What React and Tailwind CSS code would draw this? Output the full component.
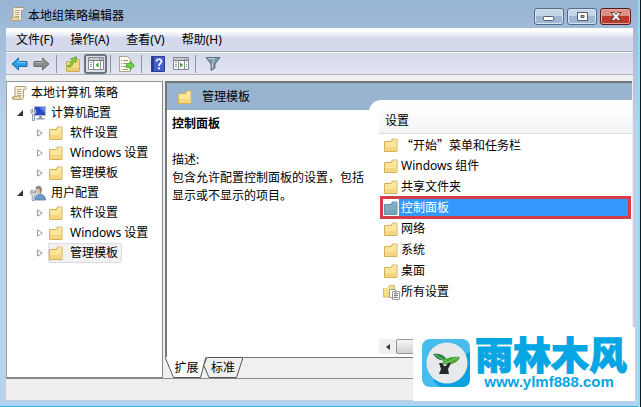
import React from 'react';

const FolderIcon = ({ selected }) => (
  <svg viewBox="0 0 16 16" className="w-4 h-4 shrink-0" aria-hidden="true">
    <path d="M1.500 4.500h6.500l1.500-2.500h4.500v12.500H1.500z" fill={selected ? '#6f9fb8' : '#f0d27c'} stroke={selected ? '#6292ab' : '#d3b15c'} />
    <path d="M2 5h6.500L10 3.500h3.500V14H2z" fill={selected ? '#82abbd' : '#fbe49c'} />
    <path d="M2 10h11.500v4H2z" fill={selected ? '#76a5ba' : '#f5d680'} />
    <path d="M10.500 2.500h3v1h-3.500z" fill={selected ? '#a5c8d4' : '#fff6d5'} />
  </svg>
);

const ScrollIcon = () => (
  <svg viewBox="0 0 16 16" className="w-4 h-4 shrink-0" aria-hidden="true">
    <path d="M5 1.500h9c1.500 0 1.500 3 0 3h-1.500v8c0 1.300-.8 2-2 2H2.500c-1.500 0-1.500-3 0-3H4V3c0-.8.300-1.500 1-1.500z" fill="#f7f0d8" stroke="#b39b6c" />
    <path d="M6 4.500h4.500M6 6.500h4.500M6 8.500h4.500M6 10.500h4.500" stroke="#b8a888" />
    <path d="M2.500 11.500h7v3h-7z" fill="#e8d9ac" stroke="#b39b6c" strokeWidth=".7" />
  </svg>
);

const ComputerIcon = () => (
  <svg viewBox="0 0 16 16" className="w-4 h-4 shrink-0" aria-hidden="true">
    <path d="M4.500 1.500h11v9h-11z" fill="#2a49c4" stroke="#aeb9cc" />
    <path d="M9 2h6v6z" fill="#5b85ee" />
    <path d="M9 11h3v2h2.500v1.500H6.500V13H9z" fill="#8d98ab" />
    <path d="M1 5v3l1.500 1v6.500h2V9L6 8V5L4.500 4v3h-2V4z" fill="#dfe6f0" stroke="#6b7a92" strokeWidth=".7" />
  </svg>
);

const UserIcon = () => (
  <svg viewBox="0 0 16 16" className="w-4 h-4 shrink-0" aria-hidden="true">
    <path d="M5 15c0-4 1.500-6 4.500-6s6 2 6 6z" fill="#6c9bc8" stroke="#4d769e" strokeWidth=".7" />
    <ellipse cx="8.500" cy="4.800" rx="3" ry="4" fill="#e3c19a" />
    <path d="M5.500 4C5.500-.5 12-.5 12 4.500c0 2-.5 3.500-2 4.500L9.500 4z" fill="#8b8d8c" />
    <path d="M.8 6v3l1.400 1v5.500h2V10l1.300-1V6L4.200 5v3h-2V5z" fill="#e5eaf0" stroke="#667a94" strokeWidth=".7" />
  </svg>
);

const AllSettingsIcon = () => (
  <svg viewBox="0 0 17 16" className="w-[17px] h-4 shrink-0" aria-hidden="true">
    <path d="M.5 4.500V13h7V9h4V1.500H6.500L5 4.500z" fill="#f6dc89" stroke="#d6bb6c" />
    <path d="M1 5h4.500L7 2.500" fill="none" stroke="#fff3c8" />
    <path d="M6.500 5.500h6v8h-6zM9.500 7.500h7v8h-7z" fill="#fff" stroke="#9b9b9b" />
    <path d="M11 9.500h1m1 0h2m-4 2h1m1 0h2m-4 2h1m1 0h2" stroke="#777" />
  </svg>
);

const ArrowIcon = ({ forward }) => (
  <svg viewBox="0 0 17 14" className={forward ? 'w-[17px] h-3.5 rotate-180' : 'w-[17px] h-3.5'} aria-hidden="true">
    <path d="M7.500 1v3.500H16v5H7.500V13L1 7z" fill={forward ? '#8c8c8c' : '#2aa0e6'} stroke={forward ? '#6b6b6b' : '#2267a6'} strokeLinejoin="round" />
    <path d={forward ? 'M7 11V8.500h8' : 'M7 3v2.500h8'} fill="none" stroke={forward ? '#b5b5b5' : '#7ed3fa'} />
  </svg>
);

const FolderUpIcon = () => (
  <svg viewBox="0 0 16 16" className="w-4 h-4" aria-hidden="true">
    <path d="M1.500 5.500h6.500l1.500-2h5v12h-13z" fill="#f5da8c" stroke="#cdab57" />
    <path d="M2 12h12v3H2z" fill="#efcb70" />
    <path d="M2 9.500c1 .8 2.500.5 3-1C5.500 6.500 6 5.500 7.500 4.500L5.500 3 11.500.8 11 6.500 9.300 5.500C8 7 8 8 7 9.500c-1.300 2-4 2-5 0z" fill="#8ccc39" stroke="#4d9820" strokeWidth=".7" />
  </svg>
);

const PanelIcon = ({ right }) => (
  <svg viewBox="0 0 16 13" className="w-4 h-[13px]" aria-hidden="true">
    <path d="M.5.5h15v12H.5z" fill="#fff" stroke="#84888f" />
    <path d="M1 1h14v2H1z" fill="#c6cbd3" />
    <path d="M11 2h1m1 0h1M1 3.500h14" stroke="#787d86" />
    <path d={right ? 'M11.500 4v8M5.500 4v8' : 'M5.500 4v8M12.500 4v8'} stroke="#8d929a" />
    <path d={right ? 'M7 5.500v5l3-2.500z' : 'M10.500 5.500v5l-3-2.500z'} fill="#35a12b" />
    <path d={right ? 'M2 5.500h2m-2 2h2m-2 2h2m9-4h1m-1 2h1m-1 2h1' : 'M2 5.500h2m-2 2h2m-2 2h2'} stroke="#9299a4" />
  </svg>
);

const ExportIcon = () => (
  <svg viewBox="0 0 16 16" className="w-4 h-4" aria-hidden="true">
    <path d="M.5.5h8l3 3v12H.5z" fill="#fffdf0" stroke="#aaa68a" />
    <path d="M2 4.500h1m1 0h5m-7 3h1m1 0h3m-5 3h1m1 0h3m-5 3h1m1 0h5" stroke="#969686" />
    <path d="M7.500 7.500h3.500V5l4.500 4.500L11 14v-2.500H7.500z" fill="#6fd04a" stroke="#3a9e28" strokeWidth=".8" />
  </svg>
);

const HelpIcon = () => (
  <svg viewBox="0 0 14 16" className="w-3.5 h-4" aria-hidden="true">
    <path d="M.5.5h13v15H.5z" fill="#4561c8" stroke="#2b3f91" />
    <path d="M1 1h2v14H1z" fill="#263c9b" />
    <path d="M5.500 5.500C5.500 2.500 10.500 2.500 10.500 5.500c0 2-2.500 2-2.500 4.500" fill="none" stroke="#fff" strokeWidth="1.700" />
    <circle cx="8" cy="12.300" r="1.100" fill="#fff" />
  </svg>
);

const FilterIcon = () => (
  <svg viewBox="0 0 16 15" className="w-4 h-[15px]" aria-hidden="true">
    <path d="M1 1.500h14L10 8v4l-4 2.500V8z" fill="#7e96a9" stroke="#5b7083" strokeLinejoin="round" />
    <path d="M3.500 2.500h6L7.500 8v4" fill="none" stroke="#c6d6e0" />
  </svg>
);

const Separator = () => <span className="w-px h-[18px] bg-[#8f949e] shrink-0" />;

const ToolButton = ({ label, active, children }) => (
  <button
    type="button"
    aria-label={label}
    className={
      active
        ? 'w-[23px] h-5 flex items-center justify-center rounded-[3px] border-2 border-[#6e7381] bg-[#dcdde6]'
        : 'w-[22px] h-5 flex items-center justify-center'
    }
  >
    {children}
  </button>
);

const menus = ['文件(F)', '操作(A)', '查看(V)', '帮助(H)'];

const tree = [
  { label: '计算机配置', Icon: ComputerIcon, children: ['软件设置', 'Windows 设置', '管理模板'] },
  { label: '用户配置', Icon: UserIcon, children: ['软件设置', 'Windows 设置', '管理模板'], selected: 2 },
];

const settings = ['“开始”菜单和任务栏', 'Windows 组件', '共享文件夹', '控制面板', '网络', '系统', '桌面', '所有设置'];

const TitleBar = () => (
  <header className="h-7 shrink-0 flex items-center pl-[3px]">
    <ScrollIcon />
    <h1 className="ml-[3px] mt-1 flex-1">本地组策略编辑器</h1>
    <div className="flex gap-[3px] mr-0.5 mt-1">
      <button type="button" aria-label="最小化" className="w-[30px] h-[17px] rounded-[3px] border border-[#526b89] bg-linear-to-b from-[#c5d6e9] from-50% to-[#9eb8d4] to-50% flex items-center justify-center shadow-[inset_0_0_0_1px_#d5e3f2]">
        <svg viewBox="0 0 12 5" className="w-3 h-[5px] mt-1"><rect x=".5" y=".5" width="10" height="4" rx="1" fill="#fff" stroke="#535d6c" /></svg>
      </button>
      <button type="button" aria-label="最大化" className="w-[30px] h-[17px] rounded-[3px] border border-[#526b89] bg-linear-to-b from-[#c5d6e9] from-50% to-[#9eb8d4] to-50% flex items-center justify-center shadow-[inset_0_0_0_1px_#d5e3f2]">
        <svg viewBox="0 0 11 9" className="w-[11px] h-[9px]"><path fillRule="evenodd" d="M.5.500h10v8H.5zM4 3.500h3v2H4z" fill="#fff" stroke="#535d6c" /></svg>
      </button>
      <button type="button" aria-label="关闭" className="w-[31px] h-[17px] rounded-[3px] border border-[#501b20] bg-linear-to-b from-[#dc8f82] from-50% to-[#bd3a28] to-50% flex items-center justify-center shadow-[inset_0_0_0_1px_#e5a59b]">
        <svg viewBox="0 0 12 9" className="w-3 h-[9px]"><path d="M1 .5h3l2 2 2-2h3L8 4.500l3 4H8l-2-2-2 2H1l3-4z" fill="#fff" stroke="#5a4448" /></svg>
      </button>
    </div>
  </header>
);

const Toolbar = () => (
  <div className="h-[23px] shrink-0 flex items-center pl-0.5 border-b border-[#aeb2bf] bg-linear-to-b from-[#d4d9ea] to-[#e2e5f2] border-t border-t-white">
    <ToolButton label="后退"><ArrowIcon /></ToolButton>
    <ToolButton label="前进"><ArrowIcon forward /></ToolButton>
    <span className="w-1" />
    <Separator />
    <span className="w-[5px]" />
    <ToolButton label="上一级"><FolderUpIcon /></ToolButton>
    <ToolButton label="显示控制台树" active><PanelIcon /></ToolButton>
    <span className="w-[3px]" />
    <Separator />
    <span className="w-[5px]" />
    <ToolButton label="导出列表"><ExportIcon /></ToolButton>
    <span className="w-[3px]" />
    <Separator />
    <span className="w-[5px]" />
    <ToolButton label="帮助"><HelpIcon /></ToolButton>
    <span className="w-px" />
    <ToolButton label="显示操作窗格"><PanelIcon right /></ToolButton>
    <span className="w-[3px]" />
    <Separator />
    <span className="w-1.5" />
    <ToolButton label="筛选器"><FilterIcon /></ToolButton>
  </div>
);

const Tree = () => (
  <nav className="w-[157px] shrink-0 bg-white border border-l-[#a0a0a0] border-t-[#8e9299] border-r-[#84878c] border-b-[#84878c] pt-px leading-5">
    <a href="#root-policy" className="flex h-5 items-center pl-1 gap-1">
      <ScrollIcon />
      本地计算机 策略
    </a>
    {tree.map(({ label, Icon, children, selected }) => (
      <div key={label}>
        <a href={`#${label}`} className="flex h-5 items-center pl-2.5">
          <svg viewBox="0 0 6 6" className="w-1.5 h-1.5 mr-[7px]"><path d="M6 0v6H0z" fill="#333" /></svg>
          <Icon />
          <span className="ml-[5px]">{label}</span>
        </a>
        {children.map((child, i) => (
          <a key={child} href={`#${label}-${child}`} className="flex h-5 items-center pl-[30px]">
            <svg viewBox="0 0 6 8" className="w-1.5 h-2 mr-[5px]"><path d="M.5.8v6.400L5.200 4z" fill="#fff" stroke="#9a9a9a" /></svg>
            <span
              className={
                i === selected
                  ? 'flex h-5 items-center gap-1 pr-1 rounded-xs bg-[#f1f1f1] outline -outline-offset-1 outline-[#dcdcdc]'
                  : 'flex h-5 items-center gap-1 pr-1'
              }
            >
              <FolderIcon />
              <span className="ml-0.5">{child}</span>
            </span>
          </a>
        ))}
      </div>
    ))}
  </nav>
);

const SettingsList = () => (
  <section className="flex-1 min-w-0 -mt-2.5 rounded-tl-[12px] bg-white flex flex-col pl-[10px]">
    <div className="mt-2 h-[26px] shrink-0 pl-1.5 flex items-center border-b border-[#dedede] bg-linear-to-b from-white to-[#f2f3f5]">设置</div>
    <ul className="flex-1 px-0.5">
      {settings.map((name, i) => {
        const selected = name === '控制面板';
        return (
          <li key={name}>
            <button
              type="button"
              className={
                selected
                  ? 'relative w-full h-[21px] flex items-center pl-0.5 text-left text-white outline-3 -outline-offset-2 outline-[#d33e49]'
                  : 'w-full h-[21px] flex items-center pl-0.5 text-left'
              }
            >
              {i === settings.length - 1 ? <AllSettingsIcon /> : <FolderIcon selected={selected} />}
              <span
                className={
                  selected
                    ? 'flex-1 h-full leading-[21px] bg-[#3399ff] pl-0.5'
                    : i === 0
                      ? "pl-0.5 font-['Noto_Sans_CJK_SC',sans-serif]"
                      : i === settings.length - 1
                        ? 'pl-px'
                        : 'pl-0.5'
                }
              >
                {name}
              </span>
            </button>
          </li>
        );
      })}
    </ul>
    <div className="h-[15px] mb-[3px] flex bg-[#f0f0f0]">
      <button type="button" aria-label="向左滚动" className="w-[17px] flex items-center justify-center">
        <svg viewBox="0 0 4 6" className="w-1 h-1.5"><path d="M4 0v6L0 3z" fill="#333" /></svg>
      </button>
      <span className="w-2/3 h-full rounded-xs border border-[#979797] bg-linear-to-b from-[#f5f5f5] to-[#d2d2d4]" />
    </div>
  </section>
);

const Tabs = () => (
  <div className="h-[21px] shrink-0 flex">
    <button type="button" className="relative w-[41px] text-center">
      <svg viewBox="0 0 41 21" className="absolute inset-0 w-full h-full"><path d="M0 0 8.500 20.500h27L41 0" fill="#fff" stroke="#555" /></svg>
      <span className="relative pl-0.5">扩展</span>
    </button>
    <button type="button" className="relative w-[38px] text-center">
      <svg viewBox="0 0 38 21" className="absolute inset-0 w-full h-full overflow-visible"><path d="M-3 10 1 .5h36L30.500 20.500H3L-2 9" fill="#f0f0f0" stroke="#555" /></svg>
      <span className="relative pr-1">标准</span>
    </button>
    <span className="flex-1 border-t border-[#777]" />
  </div>
);

const Details = () => (
  <main className="flex-1 min-w-0 flex flex-col">
    <div className="flex-1 flex flex-col bg-white border-l-2 border-t-2 border-[#73777c]">
      <div className="h-[27px] shrink-0 flex items-center pl-2.5 gap-[9px] bg-[#99b4d1]">
        <FolderIcon />
        管理模板
      </div>
      <div className="flex-1 flex">
        <article className="w-[202px] shrink-0 pl-[5px] pt-[5px] leading-[18px]">
          <h2 className="font-bold">控制面板</h2>
          <p className="mt-[18px]">描述:</p>
          <p>包含允许配置控制面板的设置，包括显示或不显示的项目。</p>
        </article>
        <SettingsList />
      </div>
    </div>
    <Tabs />
  </main>
);

const Watermark = () => (
  <aside className="absolute right-[6px] bottom-[6px] w-[222px] h-[74px] bg-white flex items-start pl-[9px] pt-3 text-[#06a5e3]">
    <svg viewBox="0 0 48 48" className="w-12 h-12 shrink-0" aria-hidden="true">
      <rect width="48" height="48" rx="8" fill="#48bceb" />
      <path d="M47 13 11 42l7 6h22q8 0 8-8V13z" fill="#08a3df" />
      <circle cx="25" cy="24" r="20.500" fill="#e8e9eb" />
      <path d="M11 15c7-1 12 1 14 7-6 0-11-2-14-7z" fill="#278644" />
      <path d="M20 25c1-5 7-8 18-7-2 6-10 9-18 7z" fill="#49a835" />
      <path d="M13 16 24 22M22 24.500l14-6" stroke="#b9dca8" strokeWidth=".6" />
      <path d="M17 24h3l2 3h2l2-3h3l-3 6 1 5H17l2-5z" fill="#25282c" />
    </svg>
    <div className="ml-[5px] -mt-1.5 flex flex-col items-center">
      <span className="font-['Noto_Sans_CJK_SC',sans-serif] font-black text-[38px] leading-10 [-webkit-text-stroke:1px_#06a5e3]">雨林木风</span>
      <span className="font-['Liberation_Sans',sans-serif] font-bold text-[15px] leading-4 mt-px mr-1">www.ylmf888.com</span>
    </div>
  </aside>
);

const App = () => {
  return (
    <div lang="zh-CN" className="relative min-h-screen flex flex-col pl-1.5 pr-2 pb-[7px] bg-linear-to-b from-[#98b4d3] to-[#b9d1ea] to-30% text-black text-[12px] leading-4 font-['Noto_Sans','Noto_Sans_CJK_SC',sans-serif] shadow-[inset_-1px_0_#10191f,inset_-3px_0_#91dcf5,inset_0_-1px_#36b8dc,inset_0_-4px_#acd3f2]">
      <TitleBar />
      <div className="flex-1 flex flex-col bg-[#f0f0f0]">
        <ul className="h-6 shrink-0 flex items-center gap-[17px] pl-2.5 border-b border-[#a9adb9] bg-linear-to-b from-white from-10% via-[#e5e9f4] via-35% to-[#d4daeb] to-40%">
          {menus.map((menu) => (
            <li key={menu}>
              <button type="button">{menu}</button>
            </li>
          ))}
        </ul>
        <Toolbar />
        <div className="flex-1 flex gap-0.5 pt-1.5 pr-px">
          <Tree />
          <Details />
        </div>
        <footer className="h-[22px] shrink-0 border-t border-[#8b8b8b] bg-[#f0eded]" />
      </div>
      <Watermark />
    </div>
  );
};

export default App;
